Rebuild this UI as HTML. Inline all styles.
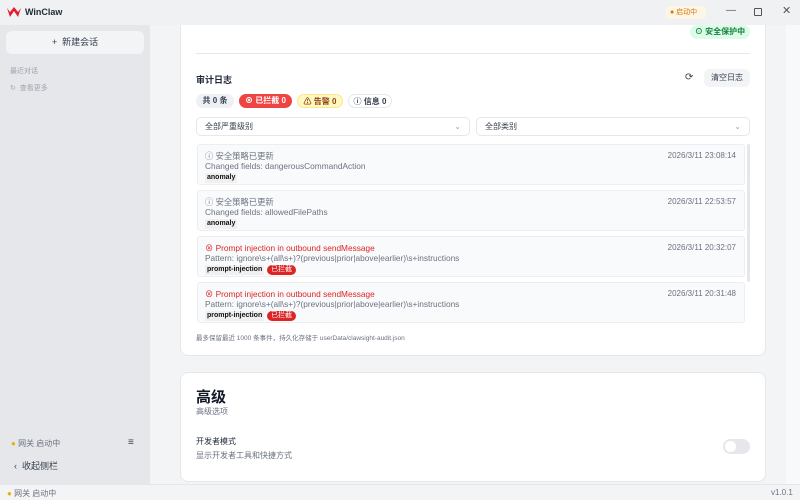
<!DOCTYPE html>
<html><head><meta charset="utf-8"><style>
*{margin:0;padding:0;box-sizing:border-box}
body{width:800px;height:500px;overflow:hidden;font-family:"Liberation Sans","Noto Sans CJK SC",sans-serif;background:#f3f4f6;position:relative;color:#1f2937}
.abs{position:absolute}
.title{left:0;top:0;width:800px;height:25px;background:#f0f1f3;z-index:10}
.side{left:0;top:25px;width:150px;height:459px;background:#e5e7eb}
.main{left:150px;top:25px;width:636px;height:459px;background:#f3f4f6}
.scroll{left:786px;top:25px;width:14px;height:459px;background:#f8f9fa}
.card{background:#fff;border:1px solid #e5e7eb;border-radius:8px}
.status{left:0;top:484px;width:800px;height:16px;background:#f3f4f6;border-top:1px solid #e5e7eb;font-size:8px;color:#6b7280}
.pill{position:absolute;height:14px;border-radius:7px;font-size:8px;font-weight:bold;line-height:14px;text-align:center}
.sel{position:absolute;top:117px;height:19px;border:1px solid #e5e7eb;border-radius:5px;font-size:8px;line-height:17px;padding-left:8px;color:#374151}
.sel span{position:absolute;right:8px;top:0;color:#9ca3af}
.item{position:absolute;left:197px;width:548px;height:41px;background:#f9fafb;border:1px solid #eceef1;border-radius:3px;font-size:8.3px}
.item .t{position:absolute;left:7px;top:5px;color:#6b7280}
.item .d{position:absolute;left:7px;top:16px;color:#6b7280}
.item .ts{position:absolute;right:8px;top:6px;color:#6b7280;font-size:8px}
.item .tag{position:absolute;left:7px;top:28px;font-size:7px;font-weight:bold;color:#111;background:#f0f0f0;padding:0 2px;line-height:10px}
.item .red{position:absolute;left:69px;top:28px;font-size:7px;color:#fff;background:#dc2626;border-radius:5px;padding:0 4px;line-height:10px}
.item.r .t{color:#dc2626}
</style></head><body>
<div class="abs title">
 <svg class="abs" style="left:7px;top:7px" width="14" height="11" viewBox="0 0 14 11"><path d="M0 1 L3 10 L7 4 L11 10 L14 1 L11 5 L7 0 L3 5Z" fill="#e11d2e"/></svg>
 <div class="abs" style="left:25px;top:7px;font-size:9px;font-weight:bold;color:#1f2937">WinClaw</div>
 <div class="abs" style="left:666px;top:6px;width:40px;height:13px;background:#fdf5e6;border-radius:3px;font-size:7px;color:#d97706;line-height:13px;padding-left:4px">● 启动中</div>
 <div class="abs" style="left:726px;top:5px;font-size:10px;color:#555">—</div>
 <div class="abs" style="left:754px;top:8px;width:8px;height:8px;border:1px solid #555;border-radius:1px"></div>
 <div class="abs" style="left:782px;top:4px;font-size:11px;color:#555">✕</div>
</div>
<div class="abs side">
 <div class="abs" style="left:6px;top:6px;width:138px;height:23px;background:#f3f4f6;border-radius:6px;font-size:9px;line-height:23px;text-align:center;color:#374151">+&nbsp; 新建会话</div>
 <div class="abs" style="left:10px;top:41px;font-size:7px;color:#9ca3af">最近对话</div>
 <div class="abs" style="left:10px;top:58px;font-size:7px;color:#a0a6ae">↻ &nbsp;查看更多</div>
 <div class="abs" style="left:11px;top:413px;font-size:8px;color:#6b7280"><span style="color:#eab308">●</span> 网关 启动中</div>
 <div class="abs" style="left:128px;top:412px;font-size:10px;color:#374151">≡</div>
 <div class="abs" style="left:14px;top:434px;font-size:9px;color:#374151">‹ &nbsp;收起侧栏</div>
</div>
<div class="abs main"></div>
<div class="abs scroll"></div>
<div class="abs card" style="left:180px;top:15px;width:586px;height:341px;border-top:none;border-top-left-radius:0;border-top-right-radius:0"></div>
<div class="abs" style="left:690px;top:25px;width:60px;height:14px;background:#dcfce7;border-radius:7px;font-size:8px;font-weight:bold;color:#15803d;line-height:14px;text-align:center">⊙ 安全保护中</div>
<div class="abs" style="left:196px;top:53px;width:554px;height:1px;background:#e5e7eb"></div>
<div class="abs" style="left:196px;top:73px;font-size:9px;font-weight:bold">审计日志</div>
<div class="abs" style="left:685px;top:72px;font-size:10px;color:#374151">⟳</div>
<div class="abs" style="left:704px;top:69px;width:46px;height:18px;background:#f3f4f6;border-radius:6px;font-size:8px;line-height:18px;text-align:center;color:#374151">清空日志</div>
<div class="pill" style="left:196px;top:94px;width:38px;background:#eef0f3;color:#374151">共 0 条</div>
<div class="pill" style="left:239px;top:94px;width:53px;background:#ef4444;color:#fff">⊗ 已拦截 0</div>
<div class="pill" style="left:297px;top:94px;width:46px;background:#fef9c3;color:#92400e;border:1px solid #fde68a">⚠ 告警 0</div>
<div class="pill" style="left:348px;top:94px;width:44px;background:#fff;color:#374151;border:1px solid #e5e7eb">ⓘ 信息 0</div>
<div class="sel" style="left:196px;width:274px">全部严重级别<span>⌄</span></div>
<div class="sel" style="left:476px;width:274px">全部类别<span>⌄</span></div>
<div class="abs" style="left:747px;top:144px;width:3px;height:138px;background:#e5e7eb;border-radius:2px"></div>
<div class="item" style="top:144px"><div class="t">ⓘ 安全策略已更新</div><div class="d">Changed fields: dangerousCommandAction</div><div class="tag">anomaly</div><div class="ts">2026/3/11 23:08:14</div></div>
<div class="item" style="top:190px"><div class="t">ⓘ 安全策略已更新</div><div class="d">Changed fields: allowedFilePaths</div><div class="tag">anomaly</div><div class="ts">2026/3/11 22:53:57</div></div>
<div class="item r" style="top:236px"><div class="t">⊗ Prompt injection in outbound sendMessage</div><div class="d">Pattern: ignore\s+(all\s+)?(previous|prior|above|earlier)\s+instructions</div><div class="tag">prompt-injection</div><div class="red">已拦截</div><div class="ts">2026/3/11 20:32:07</div></div>
<div class="item r" style="top:282px"><div class="t">⊗ Prompt injection in outbound sendMessage</div><div class="d">Pattern: ignore\s+(all\s+)?(previous|prior|above|earlier)\s+instructions</div><div class="tag">prompt-injection</div><div class="red">已拦截</div><div class="ts">2026/3/11 20:31:48</div></div>
<div class="abs" style="left:196px;top:332px;font-size:6.5px;color:#6b7280">最多保留最近 1000 条事件，持久化存储于 userData/clawsight-audit.json</div>
<div class="abs card" style="left:180px;top:372px;width:586px;height:110px"></div>
<div class="abs" style="left:196px;top:386px;font-size:15px;font-weight:bold;color:#111827">高级</div>
<div class="abs" style="left:196px;top:406px;font-size:8px;color:#6b7280">高级选项</div>
<div class="abs" style="left:196px;top:436px;font-size:8px;color:#1f2937">开发者模式</div>
<div class="abs" style="left:196px;top:450px;font-size:8px;color:#6b7280">显示开发者工具和快捷方式</div>
<div class="abs" style="left:723px;top:439px;width:27px;height:15px;background:#e5e7eb;border-radius:8px"><div class="abs" style="left:2px;top:2px;width:11px;height:11px;border-radius:50%;background:#fff"></div></div>
<div class="abs status"><div class="abs" style="left:7px;top:3px"><span style="color:#eab308">●</span> 网关 启动中</div><div class="abs" style="left:771px;top:3px">v1.0.1</div></div>
</body></html>
